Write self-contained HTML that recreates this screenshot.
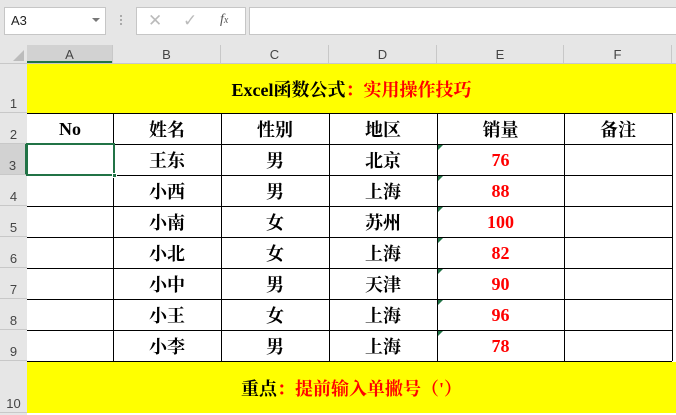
<!DOCTYPE html>
<html><head><meta charset="utf-8"><style>
*{margin:0;padding:0;box-sizing:border-box}
body{width:676px;height:415px;background:#e6e6e6;position:relative;overflow:hidden;font-family:"Liberation Sans",sans-serif}
.a{position:absolute}
.c{position:absolute;display:flex;align-items:center;justify-content:center;font-family:"Liberation Serif","Noto Serif CJK SC",serif;font-weight:bold;font-size:18px;color:#000}
.r{color:#f00}
.ch{position:absolute;top:45px;height:18px;font-size:13px;color:#444;text-align:center;line-height:20px;border-right:1px solid #c8c8c8}
.rh{position:absolute;left:0;width:27px;font-size:13px;color:#444;text-align:center;border-bottom:1px solid #c8c8c8;display:flex;align-items:flex-end;justify-content:center;padding-bottom:1px}
.h{position:absolute;height:1px;background:#000;left:27px;width:645px}
.v{position:absolute;width:1px;background:#000;top:113px;height:248px}
.tri{position:absolute;width:0;height:0;border-top:5px solid #217346;border-right:5px solid transparent}
</style></head><body>
<div class="a" style="left:4px;top:7px;width:102px;height:28px;background:#fff;border:1px solid #c6c6c6"></div>
<div class="a" style="left:11px;top:13px;font-size:13px;color:#222">A3</div>
<div class="a" style="left:92px;top:18px;width:0;height:0;border-left:4px solid transparent;border-right:4px solid transparent;border-top:4px solid #777"></div>
<div class="a" style="left:120px;top:15px;width:2px;height:2px;background:#aaa;box-shadow:0 4px #aaa,0 8px #aaa"></div>
<div class="a" style="left:136px;top:7px;width:110px;height:28px;background:#fff;border:1px solid #c6c6c6"></div>
<div class="a" style="left:148px;top:11px;font-size:17px;color:#bbb">✕</div>
<div class="a" style="left:183px;top:11px;font-size:17px;color:#bbb">✓</div>
<div class="a" style="left:220px;top:12px;font-size:14px;color:#555;font-family:'Liberation Serif',serif;font-style:italic">f<span style="font-size:10px">x</span></div>
<div class="a" style="left:249px;top:7px;width:430px;height:28px;background:#fff;border:1px solid #c6c6c6"></div>
<div class="a" style="left:13px;top:50px;width:0;height:0;border-left:11px solid transparent;border-bottom:11px solid #bcbcbc"></div>
<div class="a" style="left:27px;top:45px;width:86px;height:18px;background:#d2d2d2;border-bottom:2px solid #217346"></div>
<div class="ch" style="left:27px;width:86px">A</div>
<div class="ch" style="left:113px;width:108px">B</div>
<div class="ch" style="left:221px;width:108px">C</div>
<div class="ch" style="left:329px;width:108px">D</div>
<div class="ch" style="left:437px;width:127px">E</div>
<div class="ch" style="left:564px;width:108px">F</div>
<div class="a" style="left:0;top:63px;width:676px;height:1px;background:#c8c8c8"></div>
<div class="rh" style="top:63px;height:50px">1</div>
<div class="rh" style="top:113px;height:31px">2</div>
<div class="rh" style="top:144px;height:31px;background:#d2d2d2;border-right:2px solid #217346">3</div>
<div class="rh" style="top:175px;height:31px">4</div>
<div class="rh" style="top:206px;height:31px">5</div>
<div class="rh" style="top:237px;height:31px">6</div>
<div class="rh" style="top:268px;height:31px">7</div>
<div class="rh" style="top:299px;height:31px">8</div>
<div class="rh" style="top:330px;height:31px">9</div>
<div class="rh" style="top:361px;height:52px">10</div>
<div class="a" style="left:27px;top:64px;width:649px;height:351px;background:#fff"></div>
<div class="a" style="left:27px;top:64px;width:649px;height:49px;background:#ff0"></div>
<div class="a" style="left:27px;top:362px;width:649px;height:51px;background:#ff0"></div>
<div class="h" style="top:113px"></div><div class="h" style="top:144px"></div><div class="h" style="top:175px"></div>
<div class="h" style="top:206px"></div><div class="h" style="top:237px"></div><div class="h" style="top:268px"></div>
<div class="h" style="top:299px"></div><div class="h" style="top:330px"></div><div class="h" style="top:361px"></div>
<div class="v" style="left:113px"></div><div class="v" style="left:221px"></div><div class="v" style="left:329px"></div>
<div class="v" style="left:437px"></div><div class="v" style="left:564px"></div><div class="v" style="left:672px"></div>
<div class="tri" style="left:438px;top:145px"></div><div class="tri" style="left:438px;top:176px"></div>
<div class="tri" style="left:438px;top:207px"></div><div class="tri" style="left:438px;top:238px"></div>
<div class="tri" style="left:438px;top:269px"></div><div class="tri" style="left:438px;top:300px"></div>
<div class="tri" style="left:438px;top:331px"></div>
<div class="c" style="left:27px;top:64px;width:649px;height:49px">Excel函数公式<span class="r">：实用操作技巧</span></div>
<div class="c" style="left:27px;top:362px;width:649px;height:51px">重点<span class="r">：提前输入单撇号（'）</span></div>
<div class="c" style="left:27px;top:114px;width:86px;height:30px">No</div>
<div class="c" style="left:113px;top:114px;width:108px;height:30px">姓名</div>
<div class="c" style="left:221px;top:114px;width:108px;height:30px">性别</div>
<div class="c" style="left:329px;top:114px;width:108px;height:30px">地区</div>
<div class="c" style="left:437px;top:114px;width:127px;height:30px">销量</div>
<div class="c" style="left:564px;top:114px;width:108px;height:30px">备注</div>
<div class="c" style="left:113px;top:145px;width:108px;height:30px">王东</div><div class="c" style="left:221px;top:145px;width:108px;height:30px">男</div><div class="c" style="left:329px;top:145px;width:108px;height:30px">北京</div><div class="c r" style="left:437px;top:145px;width:127px;height:30px">76</div>
<div class="c" style="left:113px;top:176px;width:108px;height:30px">小西</div><div class="c" style="left:221px;top:176px;width:108px;height:30px">男</div><div class="c" style="left:329px;top:176px;width:108px;height:30px">上海</div><div class="c r" style="left:437px;top:176px;width:127px;height:30px">88</div>
<div class="c" style="left:113px;top:207px;width:108px;height:30px">小南</div><div class="c" style="left:221px;top:207px;width:108px;height:30px">女</div><div class="c" style="left:329px;top:207px;width:108px;height:30px">苏州</div><div class="c r" style="left:437px;top:207px;width:127px;height:30px">100</div>
<div class="c" style="left:113px;top:238px;width:108px;height:30px">小北</div><div class="c" style="left:221px;top:238px;width:108px;height:30px">女</div><div class="c" style="left:329px;top:238px;width:108px;height:30px">上海</div><div class="c r" style="left:437px;top:238px;width:127px;height:30px">82</div>
<div class="c" style="left:113px;top:269px;width:108px;height:30px">小中</div><div class="c" style="left:221px;top:269px;width:108px;height:30px">男</div><div class="c" style="left:329px;top:269px;width:108px;height:30px">天津</div><div class="c r" style="left:437px;top:269px;width:127px;height:30px">90</div>
<div class="c" style="left:113px;top:300px;width:108px;height:30px">小王</div><div class="c" style="left:221px;top:300px;width:108px;height:30px">女</div><div class="c" style="left:329px;top:300px;width:108px;height:30px">上海</div><div class="c r" style="left:437px;top:300px;width:127px;height:30px">96</div>
<div class="c" style="left:113px;top:331px;width:108px;height:30px">小李</div><div class="c" style="left:221px;top:331px;width:108px;height:30px">男</div><div class="c" style="left:329px;top:331px;width:108px;height:30px">上海</div><div class="c r" style="left:437px;top:331px;width:127px;height:30px">78</div>
<div class="a" style="left:26px;top:143px;width:89px;height:33px;border:2px solid #217346"></div>
<div class="a" style="left:112px;top:173px;width:5px;height:5px;background:#217346;border:1px solid #fff"></div>
</body></html>
